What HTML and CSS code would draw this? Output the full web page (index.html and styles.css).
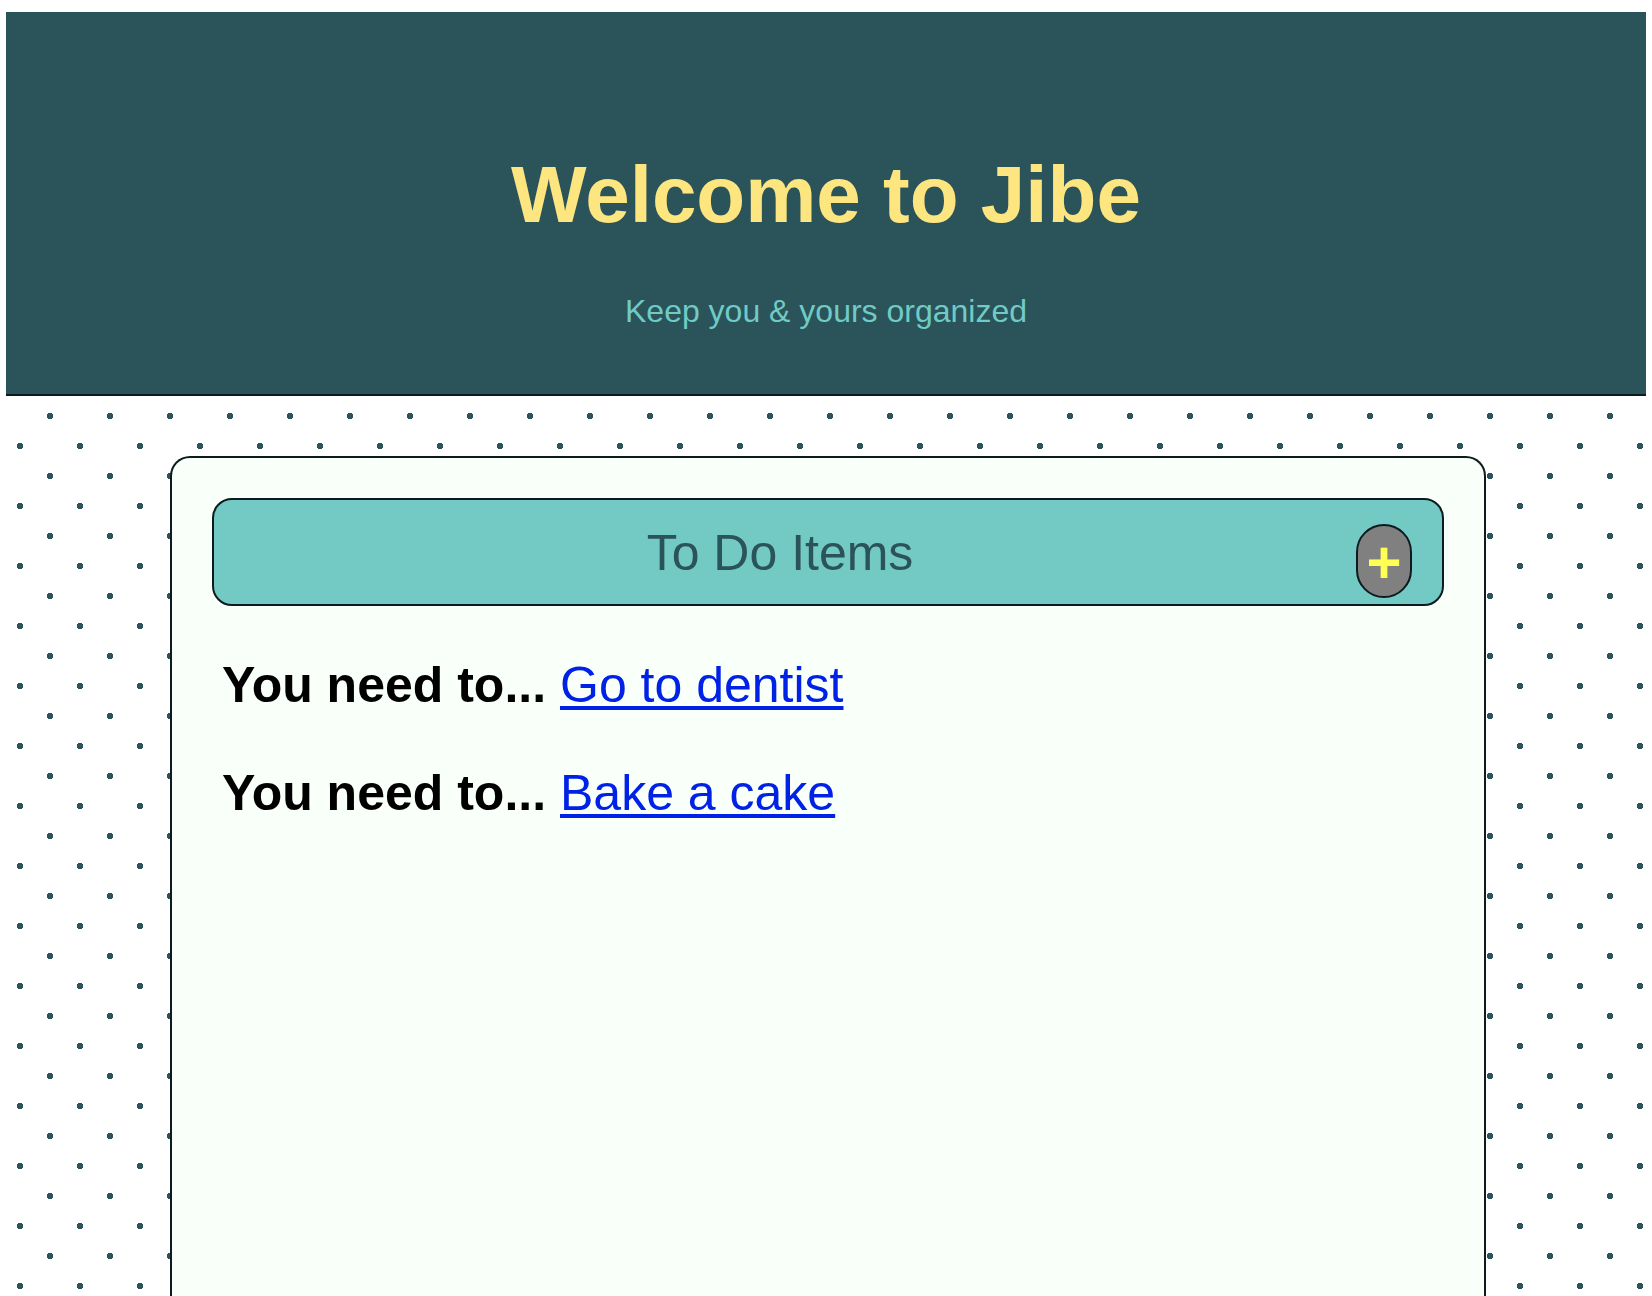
FILE: index.html
```html
<!DOCTYPE html>
<html lang="en">
<head>
  <meta charset="utf-8">
  <meta name="viewport" content="width=device-width, initial-scale=1">
  <title>Jibe</title>
  <link rel="stylesheet" href="styles.css">
</head>
<body>
  <header class="hero">
    <h1 class="hero-title">Welcome to Jibe</h1>
    <p class="hero-tagline">Keep you &amp; yours organized</p>
  </header>
  <main class="board">
    <section class="panel">
      <div class="panel-bar">
        <h2 class="panel-title">To Do Items</h2>
        <button class="add-button" type="button" aria-label="Add item">+</button>
      </div>
      <ul class="todo-list">
        <li class="todo"><strong>You need to...</strong> <a class="todo-link" href="#dentist">Go to dentist</a></li>
        <li class="todo"><strong>You need to...</strong> <a class="todo-link" href="#cake">Bake a cake</a></li>
      </ul>
    </section>
  </main>
</body>
</html>
```
FILE: styles.css
```css
* {
  box-sizing: border-box;
}

body {
  display: flex;
  flex-direction: column;
  min-height: 100vh;
  margin: 0;
  padding: 12px 6px 0;
  background: #ffffff;
  font-family: "Liberation Sans", Arial, sans-serif;
}

.hero {
  padding: 137px 20px 64px;
  border-bottom: 2px solid #0d1b1e;
  background: #2b535a;
  text-align: center;
}

.hero-title {
  margin: 0 0 51px;
  color: #fde680;
  font-size: 80px;
  line-height: 92px;
}

.hero-tagline {
  margin: 0;
  color: #6fcbc5;
  font-size: 32px;
  line-height: 38px;
}

.board {
  display: flex;
  flex: 1;
  padding: 60px calc(10% - 4px) 0 10%;
  background-color: #ffffff;
  background-image:
    radial-gradient(#2b535a 3px, transparent 3px),
    radial-gradient(#2b535a 3px, transparent 3px);
  background-position: 14px -10px, -16px 20px;
  background-size: 60px 60px;
}

.panel {
  flex: 1;
  padding: 40px 40px 0;
  border: 2px solid #0d1b1e;
  border-bottom: 0;
  border-radius: 20px 20px 0 0;
  background: #f9fff9;
}

.panel-bar {
  display: flex;
  align-items: flex-start;
  gap: 10px;
  padding: 24px 30px 6px 0;
  border: 2px solid #0d1b1e;
  border-radius: 20px;
  background: #73cac4;
}

.panel-title {
  flex: 1;
  margin: 0;
  color: #2b535a;
  font-size: 50px;
  font-weight: 400;
  line-height: 58px;
  text-align: center;
}

.add-button {
  width: 56px;
  height: 74px;
  padding: 4px 0 0;
  border: 2px solid #0d1b1e;
  border-radius: 28px;
  background: #808080;
  color: #ffff54;
  font-family: inherit;
  font-size: 60px;
  font-weight: 700;
  line-height: 66px;
  text-align: center;
}

.todo-list {
  display: flex;
  flex-direction: column;
  gap: 50px;
  margin: 50px 0;
  padding: 0 10px;
  list-style: none;
}

.todo {
  font-size: 50px;
  line-height: 58px;
}

.todo-link {
  color: #0021e6;
  text-decoration-line: underline;
  text-decoration-thickness: 4px;
  text-decoration-skip-ink: none;
  text-underline-offset: 4px;
}
```
